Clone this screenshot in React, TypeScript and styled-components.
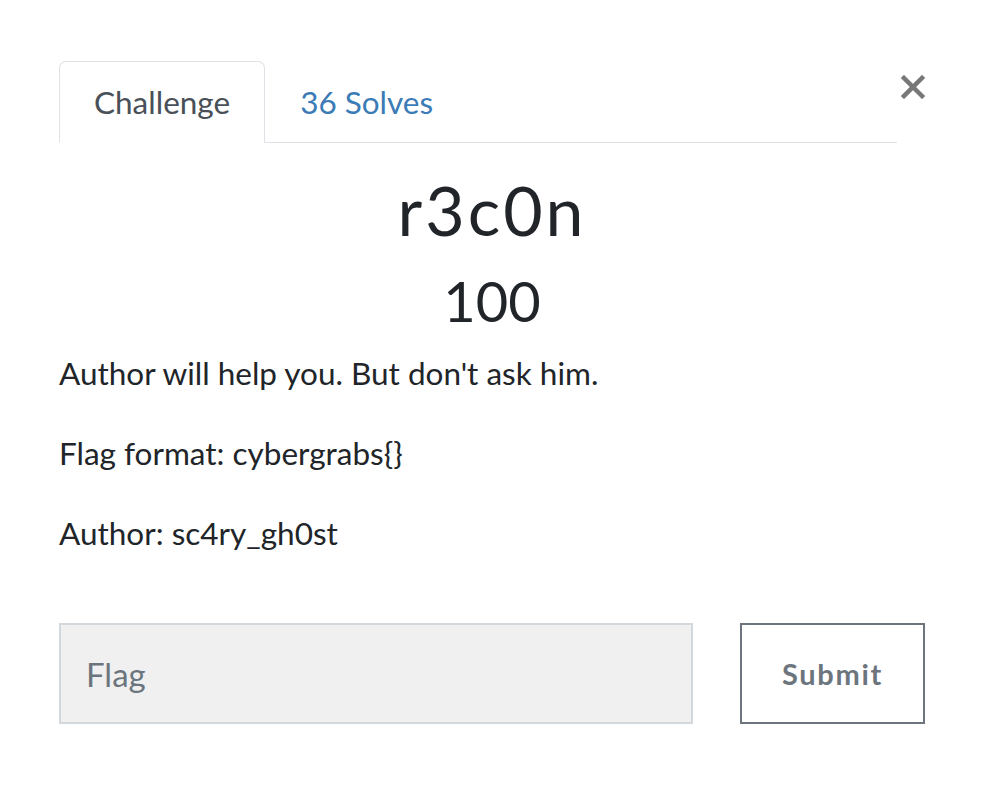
import React from "react";
import styled, { createGlobalStyle } from "styled-components";

const Global = createGlobalStyle`
  html, body { margin: 0; padding: 0; background: #fff; }
  body { font-family: Lato, "Noto Sans", sans-serif; color: #212529; }
  * { box-sizing: border-box; }
`;

const Wrapper = styled.div`
  width: 988px;
  padding: 61px 63px 0 59px;
`;

const Header = styled.div`
  display: flex;
  align-items: flex-start;
`;

const Nav = styled.ul`
  flex: 1;
  display: flex;
  list-style: none;
  margin: 0;
  padding: 0;
  border-bottom: 1px solid #dee2e6;
`;

const Tab = styled.li<{ $active?: boolean }>`
  margin-bottom: -1px;
  padding: 17px 34px 16px;
  font-size: 31.5px;
  line-height: 47px;
  border: 1px solid ${(p) => (p.$active ? "#dee2e6" : "transparent")};
  border-bottom-color: ${(p) => (p.$active ? "#fff" : "transparent")};
  border-radius: 7px 7px 0 0;
  background: ${(p) => (p.$active ? "#fff" : "transparent")};
  color: ${(p) => (p.$active ? "#495057" : "#3b7bb6")};
`;

const Close = styled.button`
  width: 28px;
  margin-top: 14px;
  padding: 0;
  border: 0;
  background: none;
  display: flex;
  justify-content: flex-end;
`;

const Title = styled.h3`
  margin: 27px 0 0;
  text-align: center;
  font-weight: 400;
  font-size: 68px;
  line-height: 80px;
  letter-spacing: 3px;
  color: #212529;
`;

const Points = styled.h4`
  margin: 16px 0 0;
  text-align: center;
  font-weight: 400;
  font-size: 56px;
  line-height: 70px;
  color: #212529;
`;

const Desc = styled.div`
  margin-top: 14px;
`;

const P = styled.p`
  margin: 0 0 33px;
  font-size: 31.5px;
  line-height: 47px;
  color: #212529;
`;

const Form = styled.div`
  display: flex;
  gap: 47px;
  margin-top: 66px;
`;

const Input = styled.input`
  flex: 1;
  height: 101px;
  background: #f0f0f0;
  border: 2px solid #d3d8dc;
  padding: 0 25px;
  font-family: Lato, "Noto Sans", sans-serif;
  font-size: 33px;
  color: #495057;
  outline: none;
  &::placeholder { color: #6c757d; }
`;

const Submit = styled.button`
  width: 185px;
  height: 101px;
  background: #fff;
  border: 2px solid #6c757d;
  font-family: Lato, "Noto Sans", sans-serif;
  font-weight: 700;
  font-size: 29px;
  letter-spacing: 1.7px;
  color: #6c757d;
`;

export default function App() {
  return (
    <>
      <Global />
      <Wrapper>
        <Header>
          <Nav>
            <Tab $active>Challenge</Tab>
            <Tab>36 Solves</Tab>
          </Nav>
          <Close aria-label="Close">
            <svg width="24" height="24" viewBox="0 0 24 24">
              <path d="M3 3 L21 21 M21 3 L3 21" stroke="#777" strokeWidth="4.5" strokeLinecap="square" />
            </svg>
          </Close>
        </Header>
        <Title>r3c0n</Title>
        <Points>100</Points>
        <Desc>
          <P>Author will help you. But don't ask him.</P>
          <P>Flag format: cybergrabs{"{}"}</P>
          <P>Author: sc4ry_gh0st</P>
        </Desc>
        <Form>
          <Input placeholder="Flag" />
          <Submit>Submit</Submit>
        </Form>
      </Wrapper>
    </>
  );
}
